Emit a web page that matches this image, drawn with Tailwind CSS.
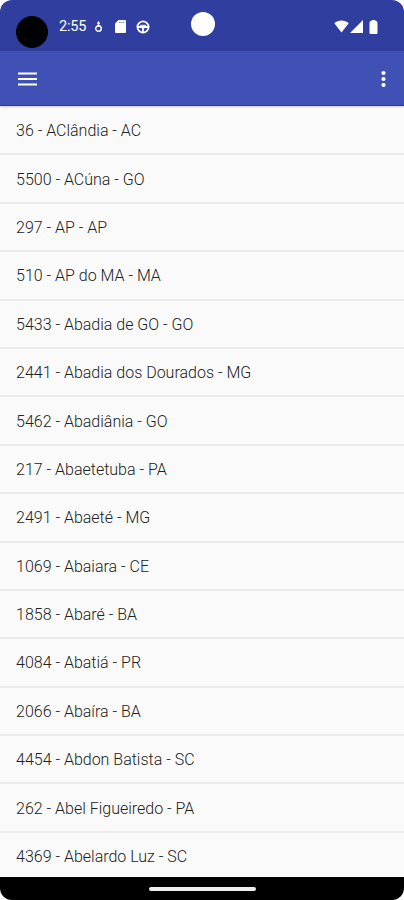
<!DOCTYPE html>
<html lang="pt-BR">
<head>
  <meta charset="utf-8"/>
  <meta content="width=device-width, initial-scale=1.0" name="viewport"/>
  <title>Cidades</title>
  <script src="https://cdn.jsdelivr.net/npm/@tailwindcss/browser@4"></script>
</head>
<body class="bg-white font-['Roboto',sans-serif]">
  <div class="relative flex h-[900px] w-[404px] flex-col overflow-hidden rounded-[12px] bg-[#fafafa]">
    <!-- Status bar -->
    <div class="flex h-[51px] shrink-0 items-center bg-[#303f9f] pt-[2px] text-white">
      <span class="mt-[10px] ml-4 size-8 rounded-full bg-black"></span>
      <span class="ml-[11px] w-[29px] text-[14.5px] tracking-[-0.2px]">2:55</span>
      <svg class="ml-[6px] h-3 w-[9px]" viewBox="0 0 9 12" fill="none" stroke="currentColor" stroke-width="1.4">
        <path d="M4.5 .5V6M3.2 2.2h2.6"/>
        <circle cx="4.500" cy="7.500" r="2.800"/>
      </svg>
      <svg class="ml-[12px] h-[13px] w-[11px]" viewBox="0 0 11 13" fill="currentColor">
        <path fill-rule="evenodd" d="M3.5 0H10a1 1 0 0 1 1 1v11a1 1 0 0 1-1 1H1a1 1 0 0 1-1-1V3.5zM4.300 1.800v1h1v-1zM6.300 1.800v1h1v-1zM8.300 1.800v1h1v-1z"/>
      </svg>
      <svg class="ml-[10px] size-[14px]" viewBox="0 0 14 14" fill="none" stroke="currentColor" stroke-width="1.8">
        <circle cx="7" cy="7" r="5.600"/>
        <path d="M1.500 7h11M7 7v5.500"/>
        <path d="M4.500 5.300h5v2.400h-5z" stroke-width="1"/>
      </svg>
      <span class="mb-[5px] ml-[41px] size-6 rounded-full bg-white"></span>
      <svg class="ml-auto h-[13px] w-[15px]" viewBox="0 0 15 13" fill="currentColor">
        <path d="M0.3 3.2C4.3-.3 10.7-.3 14.7 3.2L7.5 12.5z"/>
      </svg>
      <svg class="ml-px h-[13px] w-[13px]" viewBox="0 0 13 13" fill="currentColor">
        <path d="M13 0v13H0z"/>
      </svg>
      <svg class="mr-[26px] ml-[6px] h-[14px] w-[9px]" viewBox="0 0 9 14" fill="currentColor">
        <path d="M2.5 .7Q2.800 0 3.500 0h2Q6.200 0 6.500 .7Q8.500 .8 8.500 3V13a1 1 0 0 1-1 1h-6a1 1 0 0 1-1-1V3Q.5 .8 2.500 .7z"/>
      </svg>
    </div>

    <!-- App bar -->
    <header class="z-10 flex h-[55px] shrink-0 items-center justify-between border-b border-[#283b9f] bg-[#3f51b5] pt-[2px] pr-[18px] pl-[18px] text-white shadow-[0_1px_2px_rgba(0,0,0,0.2)]">
      <button aria-label="Menu">
        <svg class="h-[14px] w-[19px]" viewBox="0 0 19 14" fill="currentColor">
          <path d="M0 .5h19v2H0zM0 6h19v2H0zM0 11.5h19v2H0z"/>
        </svg>
      </button>
      <button aria-label="Mais opções">
        <svg class="h-[18px] w-[5px]" viewBox="0 0 5 18" fill="currentColor">
          <circle cx="2.5" cy="3" r="2.1"/>
          <circle cx="2.5" cy="9" r="2.1"/>
          <circle cx="2.5" cy="15" r="2.1"/>
        </svg>
      </button>
    </header>

    <!-- City list -->
    <ul class="min-h-0 flex-1 overflow-hidden pt-px text-[16px] font-light text-[#222] *:flex *:h-[48.4px] *:items-center *:border-b-2 *:border-[#ebebeb] *:pt-[2px] *:pl-4">
      <li>36 - AClândia - AC</li>
      <li>5500 - ACúna - GO</li>
      <li>297 - AP - AP</li>
      <li>510 - AP do MA - MA</li>
      <li>5433 - Abadia de GO - GO</li>
      <li>2441 - Abadia dos Dourados - MG</li>
      <li>5462 - Abadiânia - GO</li>
      <li>217 - Abaetetuba - PA</li>
      <li>2491 - Abaeté - MG</li>
      <li>1069 - Abaiara - CE</li>
      <li>1858 - Abaré - BA</li>
      <li>4084 - Abatiá - PR</li>
      <li>2066 - Abaíra - BA</li>
      <li>4454 - Abdon Batista - SC</li>
      <li>262 - Abel Figueiredo - PA</li>
      <li>4369 - Abelardo Luz - SC</li>
    </ul>

    <!-- Gesture bar -->
    <div class="flex h-[23px] shrink-0 items-center justify-center bg-black">
      <span class="h-1 w-[107px] rounded-full bg-[#eee]"></span>
    </div>
  </div>
</body>
</html>
